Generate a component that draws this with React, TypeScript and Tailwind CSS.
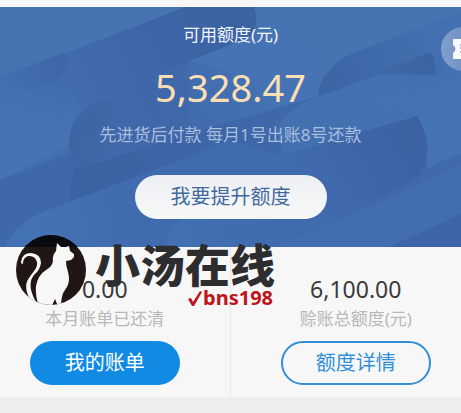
import type { ReactNode } from "react";

function HeroPattern() {
  return (
    <svg
      className="absolute inset-0 h-full w-full"
      viewBox="0 0 461 240"
      preserveAspectRatio="none"
      aria-hidden="true"
    >
      <defs>
        <linearGradient id="band" gradientUnits="userSpaceOnUse" x1="20" y1="110" x2="200" y2="30">
          <stop offset="0" stopColor="#4370b1" />
          <stop offset="0.5" stopColor="#4069ac" />
          <stop offset="1" stopColor="#3c63a4" />
        </linearGradient>
        <linearGradient id="wedge" gradientUnits="userSpaceOnUse" x1="270" y1="50" x2="150" y2="100">
          <stop offset="0" stopColor="#4573b3" />
          <stop offset="1" stopColor="#4573b3" stopOpacity="0" />
        </linearGradient>
        <linearGradient id="mist" gradientUnits="userSpaceOnUse" x1="40" y1="75" x2="40" y2="125">
          <stop offset="0" stopColor="#4573b4" stopOpacity="0" />
          <stop offset="1" stopColor="#4573b4" />
        </linearGradient>
        <linearGradient id="leaf" gradientUnits="userSpaceOnUse" x1="66" y1="50" x2="5" y2="80">
          <stop offset="0" stopColor="#3b61a2" />
          <stop offset="1" stopColor="#3b61a2" stopOpacity="0" />
        </linearGradient>
        <linearGradient id="bulb" gradientUnits="userSpaceOnUse" x1="72" y1="120" x2="135" y2="128">
          <stop offset="0" stopColor="#3d64a4" />
          <stop offset="1" stopColor="#3d64a4" stopOpacity="0" />
        </linearGradient>
        <linearGradient id="strip" gradientUnits="userSpaceOnUse" x1="75" y1="180" x2="270" y2="110">
          <stop offset="0" stopColor="#3b62a3" />
          <stop offset="1" stopColor="#3e68aa" />
        </linearGradient>
        <linearGradient id="foot" gradientUnits="userSpaceOnUse" x1="20" y1="210" x2="150" y2="190">
          <stop offset="0" stopColor="#4473b5" />
          <stop offset="1" stopColor="#406bae" />
        </linearGradient>
        <linearGradient id="wing" gradientUnits="userSpaceOnUse" x1="325" y1="70" x2="430" y2="20">
          <stop offset="0" stopColor="#3c65a6" />
          <stop offset="1" stopColor="#4370b0" />
        </linearGradient>
        <linearGradient id="tip" gradientUnits="userSpaceOnUse" x1="434" y1="55" x2="360" y2="85">
          <stop offset="0" stopColor="#3c63a4" />
          <stop offset="1" stopColor="#3c63a4" stopOpacity="0" />
        </linearGradient>
        <linearGradient id="shell" gradientUnits="userSpaceOnUse" x1="425" y1="120" x2="310" y2="190">
          <stop offset="0" stopColor="#3b61a2" />
          <stop offset="1" stopColor="#406bae" />
        </linearGradient>
        <linearGradient id="glow" gradientUnits="userSpaceOnUse" x1="160" y1="240" x2="270" y2="200">
          <stop offset="0" stopColor="#4371b4" />
          <stop offset="1" stopColor="#4371b4" stopOpacity="0" />
        </linearGradient>
      </defs>
      <rect width="461" height="240" fill="#4674b3" />
      <path d="M0 70L66 46L185 0H254Q260 18 250 30L190 54V240H0Z" fill="url(#band)" />
      <path d="M190 54V240H461V88L318 89Z" fill="#4069ac" />
      <path d="M190 54L250 30L320 40V89L215 119L100 150V92Z" fill="url(#wedge)" />
      <path d="M0 75L64 70L80 100Q69 118 69 138L0 173Z" fill="url(#mist)" />
      <path d="M0 70L64 45Q74 56 62 69Q38 88 5 82Z" fill="url(#leaf)" opacity="0.5" />
      <path d="M100 94Q69 107 69 138Q71 155 75 162L135 142V94Z" fill="url(#bulb)" />
      <path d="M0 173L69 146L75 162L72 195L60 199Q20 212 5 240H0Z" fill="#3f68ab" />
      <path d="M70 195Q69 175 75 162L215 119L318 89L277 123L283 150L230 134Z" fill="url(#strip)" />
      <path d="M5 240Q18 211 60 199L230 134L283 148V240Z" fill="url(#foot)" />
      <path d="M318 89Q319 67 345 50Q365 41 461 5V70L340 110Z" fill="url(#wing)" />
      <path d="M330 84L431 45Q440 65 431 78L340 112Z" fill="url(#tip)" />
      <path d="M277 123Q286 98 325 87L380 67L461 69V150L283 148Z" fill="#4370b1" />
      <path d="M370 95Q395 88 425 80L461 65V147L428 162L417 109Z" fill="#4572b3" />
      <path d="M283 148L417 109Q438 143 417 172Q395 192 315 223L240 240V164Z" fill="url(#shell)" />
      <path d="M165 240Q170 215 195 206L270 180L300 200L260 240Z" fill="url(#glow)" />
      <path d="M417 172Q430 157 461 147V240H275L315 222Z" fill="#406aad" />
      <path d="M310 224Q360 207 461 157V210L390 240H270Z" fill="#426eb0" />
      <path d="M390 240L461 207V240Z" fill="#3e65a8" />
    </svg>
  );
}

function TicketIcon() {
  return (
    <svg className="ml-3 h-6 w-8 shrink-0" viewBox="0 0 32 24" aria-hidden="true">
      <path d="M1 2H30V22H1Q-1 22 0 20V16Q5 12 0 8V4Q-1 2 1 2Z" fill="#f6f9fc" />
      <path d="M7 8H16M7 11H16M7 15H16" stroke="#66798f" strokeWidth="1" strokeDasharray="2 1" />
    </svg>
  );
}

function CatLogo() {
  return (
    <svg className="h-[72px] w-[72px] shrink-0" viewBox="0 0 72 72" aria-hidden="true">
      <defs>
        <clipPath id="disc">
          <circle cx="36" cy="36" r="35" />
        </clipPath>
      </defs>
      <g clipPath="url(#disc)">
        <rect width="72" height="72" fill="#211614" />
        <rect width="72" height="13" fill="#080a10" />
        <path
          d="M42 9L46 13L51 13L54 12L55 17L59 20L59 23L56 26L51 27Q51 32 53 38Q56 48 50 56Q46 61 46 73H43L40 66L36 73H24Q20 62 21 52Q23 41 31 36Q38 32 38 26Q37 21 41 17Z"
          fill="#f7f7f7"
        />
        <path
          d="M6 28Q7 19 16 19Q26 20 26 29Q25 36 19 41C13 48 15 60 24 72L21 72C12 64 8 52 14 44C18 38 23 34 22 28Q20 21 13 22Q8 24 8 29Q7 32 6 28Z"
          fill="#f7f7f7"
        />
        <path d="M40 65L42 70H38Z" fill="#211614" />
      </g>
    </svg>
  );
}

function Watermark() {
  return (
    <div className="pointer-events-none absolute top-[234px] left-[15px] flex">
      <CatLogo />
      <div className="flex flex-col items-end pl-2">
        <span className="pt-2 text-[45px] leading-[48px] font-black whitespace-nowrap text-[#2d2d2f]">小汤在线</span>
        <span className="flex items-center gap-px pr-0.5 text-[20px] leading-4 font-bold text-[#bd1420]">
          <svg className="h-4 w-3.5" viewBox="0 0 14 16" aria-hidden="true">
            <path d="M0 9L3 8L5 12L12 1L14 2L6 16H4Z" fill="currentColor" />
          </svg>
          bns198
        </span>
      </div>
    </div>
  );
}

function Summary({ amount, label, className, children }: {
  amount: string;
  label: string;
  className: string;
  children: ReactNode;
}) {
  return (
    <section className={`flex flex-col items-center pt-7 pb-3 ${className}`}>
      <p className="text-[23px] leading-7 text-[#3a3a3a]">{amount}</p>
      <p className="mt-1 text-[17px] leading-6 whitespace-nowrap text-[#b8b8b8]">{label}</p>
      {children}
    </section>
  );
}

export default function App() {
  return (
    <div className="relative min-h-screen overflow-hidden bg-[#ededed] font-['Noto_Sans','Noto_Sans_CJK_SC',sans-serif]">
      <div className="h-[7px] bg-[#f6f6f6]" />
      <header className="relative overflow-hidden bg-[#426eb0]">
        <HeroPattern />
        <div className="relative flex flex-col items-center pt-4 pb-7">
          <h1 className="text-[17px] leading-6 text-[#f0f5fb]">可用额度(元)</h1>
          <p className="mt-4 text-[38px] leading-[48px] text-[#fbdfb4]">5,328.47</p>
          <p className="mt-3 text-[17px] leading-6 whitespace-nowrap text-[#a9bddd]">先进货后付款 每月1号出账8号还款</p>
          <button
            type="button"
            className="mt-7 h-11 w-48 rounded-full bg-linear-to-b from-[#edf0f3] to-[#f7f8f8] text-xl text-[#44699f]"
          >
            我要提升额度
          </button>
        </div>
        <button
          type="button"
          aria-label="优惠券"
          className="absolute top-5 -right-6 flex h-11 w-11 items-center overflow-hidden rounded-full bg-linear-to-r from-[#819fcb] to-[#6387be]"
        >
          <TicketIcon />
        </button>
      </header>
      <main className="grid grid-cols-2 bg-[#f7f7f7]">
        <Summary amount="0.00" label="本月账单已还清" className="border-r border-[#e9e9e9] pr-5">
          <button type="button" className="mt-2.5 h-11 w-[150px] rounded-full bg-[#118ae4] text-xl text-white">
            我的账单
          </button>
        </Summary>
        <Summary amount="6,100.00" label="赊账总额度(元)" className="pl-5">
          <button
            type="button"
            className="mt-2.5 h-11 w-[150px] rounded-full border-2 border-[#318fd7] text-xl text-[#318fd7]"
          >
            额度详情
          </button>
        </Summary>
      </main>
      <Watermark />
    </div>
  );
}
